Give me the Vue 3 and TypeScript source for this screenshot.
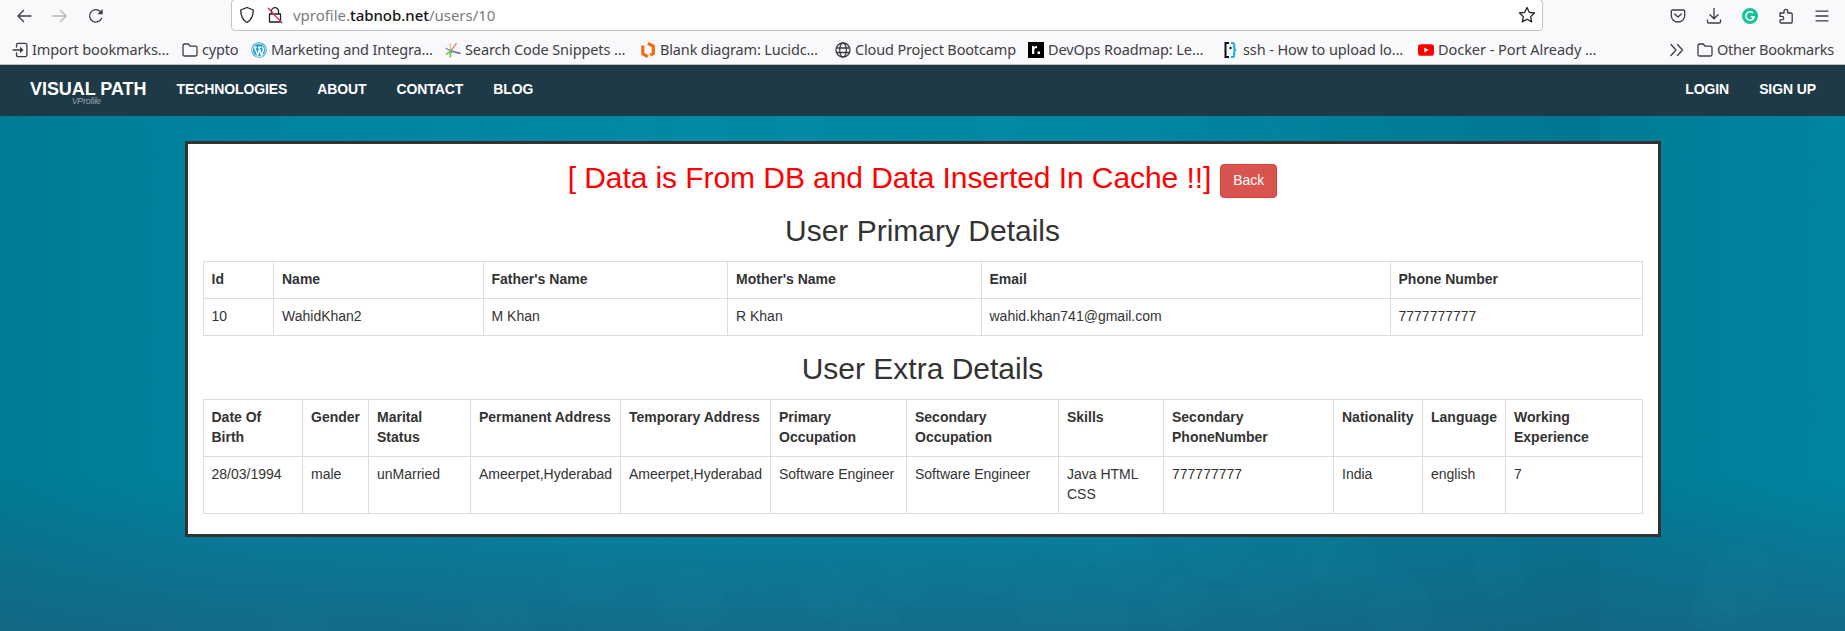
<script setup lang="ts">
interface Bookmark {
  icon: string
  label: string
  width: number
  spacing: number
}

interface Column {
  title: string
  value: string
  width: number
}

const bookmarks: Bookmark[] = [
  { icon: 'import', label: 'Import bookmarks…', width: 170, spacing: -0.12 },
  { icon: 'folder', label: 'cypto', width: 69, spacing: -0.2 },
  { icon: 'wordpress', label: 'Marketing and Integra…', width: 194, spacing: -0.15 },
  { icon: 'burst', label: 'Search Code Snippets …', width: 195, spacing: -0.1 },
  { icon: 'lucid', label: 'Blank diagram: Lucidc…', width: 195, spacing: -0.15 },
  { icon: 'globe', label: 'Cloud Project Bootcamp', width: 193, spacing: -0.15 },
  { icon: 'roadmap', label: 'DevOps Roadmap: Le…', width: 195, spacing: -0.1 },
  { icon: 'braces', label: 'ssh - How to upload lo…', width: 195, spacing: -0.1 },
  { icon: 'youtube', label: 'Docker - Port Already …', width: 195, spacing: -0.05 },
]

const links: string[] = ['TECHNOLOGIES', 'ABOUT', 'CONTACT', 'BLOG']
const accountLinks: string[] = ['LOGIN', 'SIGN UP']

const primary: Column[] = [
  { title: 'Id', value: '10', width: 70.5 },
  { title: 'Name', value: 'WahidKhan2', width: 209.5 },
  { title: "Father's Name", value: 'M Khan', width: 244.5 },
  { title: "Mother's Name", value: 'R Khan', width: 253.5 },
  { title: 'Email', value: 'wahid.khan741@gmail.com', width: 409 },
  { title: 'Phone Number', value: '7777777777', width: 252 },
]

const extra: Column[] = [
  { title: 'Date Of Birth', value: '28/03/1994', width: 99.5 },
  { title: 'Gender', value: 'male', width: 66 },
  { title: 'Marital Status', value: 'unMarried', width: 102 },
  { title: 'Permanent Address', value: 'Ameerpet,Hyderabad', width: 150 },
  { title: 'Temporary Address', value: 'Ameerpet,Hyderabad', width: 150 },
  { title: 'Primary Occupation', value: 'Software Engineer', width: 136 },
  { title: 'Secondary Occupation', value: 'Software Engineer', width: 152 },
  { title: 'Skills', value: 'Java HTML CSS', width: 105 },
  { title: 'Secondary PhoneNumber', value: '777777777', width: 170 },
  { title: 'Nationality', value: 'India', width: 89 },
  { title: 'Language', value: 'english', width: 83 },
  { title: 'Working Experience', value: '7', width: 136.5 },
]

const sections = [
  { heading: 'User Primary Details', columns: primary },
  { heading: 'User Extra Details', columns: extra },
]

// Faint discs scattered over the backdrop: x, y, radius
const discs: [number, number, number][] = [
  [1045, 605, 30], [1127, 563, 30], [1080, 535, 32], [1180, 603, 27], [1215, 550, 32],
  [1268, 585, 30], [1100, 625, 30], [990, 570, 26], [830, 592, 28], [905, 575, 28],
  [870, 630, 32], [1345, 570, 32], [1400, 610, 32], [1310, 560, 22], [500, 630, 36],
  [300, 630, 28], [455, 130, 22], [630, 128, 28], [800, 125, 24], [700, 140, 30],
  [1000, 120, 26], [1130, 130, 30], [1290, 125, 26], [1715, 610, 24], [1740, 580, 36],
  [1500, 570, 26], [590, 580, 30], [690, 600, 34],
]
</script>

<template>
  <div class="window">
    <header class="chrome">
      <div class="toolbar">
        <div class="history">
          <svg width="16" height="16" viewBox="0 0 16 16" class="line"><path d="M15 8H2M7.500 2.500 2 8l5.500 5.500" /></svg>
          <svg width="16" height="16" viewBox="0 0 16 16" class="line off"><path d="M1 8h13M8.500 2.500 14 8l-5.500 5.500" /></svg>
          <svg width="16" height="16" viewBox="0 0 16 16" class="line"><path d="M13.600 10.200A6.200 6.200 0 1 1 12.300 3.500L14 5" /><path d="M14.600 1v5.200H9.400z" class="solid" /></svg>
        </div>
        <div class="address">
          <svg width="16" height="18" viewBox="0 0 16 18" class="line strong"><path d="M8 1.500 14.300 4c0 5.500-1.500 9.800-6.300 12.500C3.200 13.800 1.700 9.500 1.700 4z" /></svg>
          <svg width="18" height="18" viewBox="0 0 18 18" class="line strong lock"><path d="M5.500 8V5.200a3.500 3.500 0 0 1 7 0V8M3.500 8h11v8h-11z" /><path d="M2.300 2.300 15.800 16.800" class="slash" /></svg>
          <span class="url">vprofile.<b>tabnob.net</b>/users/10</span>
          <svg width="18" height="18" viewBox="0 0 18 18" class="line strong star"><path d="m9 1.500 2.250 4.800 5.250.7-3.850 3.600 1 5.300L9 13.300l-4.650 2.600 1-5.300L1.500 7l5.250-.7z" /></svg>
        </div>
        <div class="tools">
          <svg width="16" height="16" viewBox="0 0 16 16" class="line"><path d="M2.500 2h11c.7 0 1.200.5 1.200 1.200v4.600a6.700 6.200 0 0 1-13.400 0V3.200C1.300 2.500 1.800 2 2.500 2zM4.700 6 8 9l3.300-3" /></svg>
          <svg width="16" height="16" viewBox="0 0 16 16" class="line"><path d="M8 0v10.500M4 6.800l4 4 4-4M1.500 12v1.800c0 .7.500 1.200 1.200 1.200h10.600c.7 0 1.200-.5 1.200-1.200V12" /></svg>
          <svg width="16" height="16" viewBox="0 0 16 16"><circle cx="8" cy="8" r="8" fill="#15c39a" /><path d="M11 5A4.200 4.200 0 1 0 12.200 8.700H8.800M11 11V8.700" fill="none" stroke="#fff" stroke-width="1.500" /></svg>
          <svg width="16" height="16" viewBox="0 0 16 16" class="line"><path d="M2 5h4V3.300a1.900 1.900 0 0 1 3.800 0V5h3.400c.6 0 1 .4 1 1v8c0 .6-.4 1-1 1H3c-.6 0-1-.4-1-1v-2.200h2a1.700 1.700 0 0 0 0-3.400H2z" /></svg>
          <svg width="16" height="16" viewBox="0 0 16 16" class="line"><path d="M2 3.200h12M2 8h12M2 12.800h12" /></svg>
        </div>
      </div>

      <div class="bookmarks">
        <div v-for="mark in bookmarks" :key="mark.label" class="bookmark" :style="{ width: mark.width + 'px' }">
          <svg v-if="mark.icon === 'import'" width="16" height="16" viewBox="0 0 16 16" class="line"><path d="M4.500 5V3c0-1 .7-1.700 1.700-1.700h7c1 0 1.700.7 1.700 1.700v10c0 1-.7 1.700-1.700 1.700h-7c-1 0-1.700-.7-1.700-1.700v-2M1 8H10" /><path d="m8 4.700 3.500 3.300L8 11.300z" class="solid" /></svg>
          <svg v-else-if="mark.icon === 'folder'" width="16" height="16" viewBox="0 0 16 16" class="line"><path d="M2.500 2h3.700l2 2.200h5.300c1 0 1.500.6 1.500 1.500v6.800c0 1-.6 1.500-1.500 1.500h-11C1.600 14 1 13.400 1 12.500v-9C1 2.600 1.600 2 2.500 2z" /></svg>
          <svg v-else-if="mark.icon === 'wordpress'" width="16" height="16" viewBox="0 0 16 16"><circle cx="8" cy="8" r="7.700" fill="#1e9fcf" /><circle cx="8" cy="8" r="6.500" fill="none" stroke="#fff" stroke-width=".8" /><path d="M2.700 5.200h3M7 5.200h3M3.600 5.200l3 8 2-6M7.800 5.200l2.800 8 1.800-5.500c.3-1.500-1.600-2-.9-3.400" fill="none" stroke="#fff" stroke-width="1.400" /></svg>
          <svg v-else-if="mark.icon === 'burst'" width="16" height="16" viewBox="0 0 16 16" fill="none" stroke-width="1.300"><path d="M6 9 .5 6" stroke="#8577c0" /><path d="M6 9 5 1.500" stroke="#d6c06a" /><path d="M6 9 11.500 1" stroke="#ef6a5b" /><path d="m6 9 9.500 2.500" stroke="#6c5aa8" /><path d="M6 9 5 15.500M6 9 1 12.500" stroke="#7ac653" stroke-width="1.800" /><circle cx="6" cy="9" r="1.800" fill="#5fbf4a" /></svg>
          <svg v-else-if="mark.icon === 'lucid'" width="16" height="16" viewBox="0 0 16 16" fill="none" stroke="#f96b13" stroke-width="3.200"><path d="M2.800 3.500v8.300l5 2.900" /><path d="m8 1.300 5.300 3v7.200l-3 1.700" /></svg>
          <svg v-else-if="mark.icon === 'globe'" width="16" height="16" viewBox="0 0 16 16" class="line"><circle cx="8" cy="8" r="7" /><ellipse cx="8" cy="8" rx="3.300" ry="7" /><path d="M1.500 6h13M1.500 10.500h13" /></svg>
          <svg v-else-if="mark.icon === 'roadmap'" width="16" height="16" viewBox="0 0 16 16"><path d="M0 0h16v16H0z" fill="#000" /><path d="M4 4h2v1.200C6.700 4.300 7.600 4 9 4v2c-2 0-2.700.7-2.700 2v4H4zM9.500 9.500H12V12H9.500z" fill="#fff" /></svg>
          <svg v-else-if="mark.icon === 'braces'" width="16" height="16" viewBox="0 0 16 16" fill="none" stroke-width="2"><path d="M6 1H2.500v14H6" stroke="#111" /><path d="M8 1h1.500c1.200 0 1.700.6 1.700 1.700V6c0 1 .7 2 2 2-1.300 0-2 1-2 2v3.300c0 1.100-.5 1.700-1.700 1.700H8" stroke="#18aee8" /><path d="M7.500 5v2" stroke="#111" /></svg>
          <svg v-else width="16" height="16" viewBox="0 0 16 16"><rect y="2.300" width="16" height="11.400" rx="2.800" fill="#f00" /><path d="m6.300 5.600 4.200 2.400-4.200 2.400z" fill="#fff" /></svg>
          <span :style="{ letterSpacing: mark.spacing + 'px' }">{{ mark.label }}</span>
        </div>
        <div class="overflow">
          <svg width="16" height="16" viewBox="0 0 16 16" class="line"><path d="m2 2.500 5 5.500-5 5.500M8.500 2.500l5 5.500-5 5.500" /></svg>
        </div>
        <div class="bookmark other">
          <svg width="16" height="16" viewBox="0 0 16 16" class="line"><path d="M2.500 2h3.700l2 2.200h5.300c1 0 1.500.6 1.500 1.500v6.800c0 1-.6 1.500-1.500 1.500h-11C1.600 14 1 13.400 1 12.500v-9C1 2.600 1.600 2 2.500 2z" /></svg>
          <span>Other Bookmarks</span>
        </div>
      </div>
    </header>

    <nav class="navbar">
      <a class="brand">VISUAL PATH<small>VProfile</small></a>
      <a v-for="link in links" :key="link" class="link">{{ link }}</a>
      <div class="account">
        <a v-for="link in accountLinks" :key="link" class="link">{{ link }}</a>
      </div>
    </nav>

    <main class="page">
      <svg class="backdrop" viewBox="0 116 1845 515" preserveAspectRatio="none" aria-hidden="true">
        <defs>
          <filter id="grain" x="0" y="0" width="100%" height="100%">
            <feTurbulence type="fractalNoise" baseFrequency="0.35" numOctaves="3" seed="4" />
            <feColorMatrix values="0 0 0 0 0  0 0 0 0 .2  0 0 0 0 .27  0 0 0 .28 -.07" />
          </filter>
        </defs>
        <rect y="116" width="1845" height="515" filter="url(#grain)" />
        <circle v-for="([cx, cy, r], i) in discs" :key="i" :cx="cx" :cy="cy" :r="r" />
      </svg>
      <section class="card">
        <h2 class="notice">
          <span>[ Data is From DB and Data Inserted In Cache !!]</span>
          <a class="button">Back</a>
        </h2>
        <template v-for="section in sections" :key="section.heading">
          <h2>{{ section.heading }}</h2>
          <table>
            <colgroup>
              <col v-for="column in section.columns" :key="column.title" :style="{ width: column.width + 'px' }" />
            </colgroup>
            <thead>
              <tr><th v-for="column in section.columns" :key="column.title">{{ column.title }}</th></tr>
            </thead>
            <tbody>
              <tr><td v-for="column in section.columns" :key="column.title">{{ column.value }}</td></tr>
            </tbody>
          </table>
        </template>
      </section>
    </main>
  </div>
</template>

<style>
body {
  margin: 0;
  overflow: hidden;
}
</style>

<style scoped>
.window {
  width: 1845px;
  height: 631px;
  display: flex;
  flex-direction: column;
  overflow: hidden;
  font-family: "Liberation Sans", Arial, sans-serif;
  font-size: 14px;
  line-height: 20px;
  color: #333;
}

.window * {
  box-sizing: border-box;
}

svg {
  flex: none;
  display: block;
}

.line {
  fill: none;
  stroke: #3d3c42;
  stroke-width: 1.3;
  stroke-linejoin: round;
  stroke-linecap: round;
}

.line.strong {
  stroke: #222127;
}

.line.off {
  stroke: #b3b3b5;
}

.line .solid {
  fill: #3d3c42;
  stroke: none;
}

.line .slash {
  stroke: #e22850;
}

.chrome {
  height: 65px;
  flex: none;
  background: #f9f9fb;
  border-bottom: 1px solid #bdbdbe;
  font-family: "Noto Sans", "Open Sans", sans-serif;
  color: #3f3e44;
}

.toolbar {
  height: 31px;
  display: flex;
}

.history {
  width: 231px;
  display: flex;
  align-items: center;
  gap: 20px;
  padding-left: 16px;
}

.address {
  width: 1312px;
  height: 32px;
  margin-top: -1px;
  display: flex;
  align-items: center;
  background: #fff;
  border: 1px solid #c3c3c5;
  border-radius: 4px;
  padding: 0 6px 0 7px;
}

.lock {
  margin-left: 11px;
}

.url {
  margin-left: 9px;
  font-size: 15px;
  letter-spacing: -.03px;
  color: #7b7b7e;
}

.url b {
  font-weight: 500;
  color: #15141a;
}

.star {
  margin-left: auto;
}

.tools {
  margin-left: 127px;
  display: flex;
  align-items: center;
  gap: 20px;
}

.bookmarks {
  height: 33px;
  padding: 5px 11px 0 12px;
  display: flex;
  align-items: center;
}

.bookmark {
  flex: none;
  display: flex;
  align-items: center;
  gap: 4px;
  font-size: 14.500px;
  white-space: nowrap;
}

.bookmark span {
  padding-bottom: 2px;
}

.bookmark.other {
  letter-spacing: -.23px;
}

.overflow {
  margin-left: auto;
  margin-right: 12px;
}

.navbar {
  height: 51px;
  flex: none;
  display: flex;
  padding: 0 14px 0 15px;
  background: #1e3a46;
  color: #fff;
  font-weight: bold;
}

.brand {
  padding: 15px 15px 0;
  font-size: 18px;
  line-height: 18px;
  letter-spacing: -.05px;
  display: flex;
  flex-direction: column;
  align-items: center;
}

.brand small {
  margin: -1px 4px 0 0;
  font-size: 9px;
  line-height: 9px;
  letter-spacing: -.3px;
  font-style: italic;
  font-weight: normal;
  color: #98a3a9;
}

.link {
  padding: 14px 15px;
  letter-spacing: -.1px;
}

.account {
  margin-left: auto;
  display: flex;
}

.page {
  flex: 1;
  position: relative;
  padding-top: 25px;
  background:
    linear-gradient(to bottom, rgba(36, 86, 117, 0) 360px, rgba(36, 86, 117, .58) 515px),
    linear-gradient(to right, rgba(0, 96, 120, 0) 1100px, rgba(0, 96, 120, .4) 1580px, rgba(0, 96, 120, .4) 1600px, rgba(0, 96, 120, .28) 1600px, rgba(0, 96, 120, .12) 1740px, rgba(0, 96, 120, 0) 1845px),
    linear-gradient(to right, #007b94 0, #0083a0 230px, #0089a6 700px, #0088a5 1000px, #0085a2 1845px);
}

.backdrop {
  position: absolute;
  inset: 0;
  width: 100%;
  height: 100%;
}

.backdrop circle {
  fill: rgba(40, 155, 180, .045);
}

.card {
  position: relative;
  display: flow-root;
  width: 80%;
  margin: 0 auto;
  padding: 0 15px;
  background: #fff;
  border: 3px solid #333;
}

h2 {
  margin: 20px 0 10px;
  height: 33px;
  font-size: 30px;
  font-weight: 500;
  line-height: 25px;
  text-align: center;
}

.notice {
  height: 34px;
  display: flex;
  justify-content: center;
  align-items: flex-start;
  gap: 9px;
  color: #f00;
}

.notice span {
  padding-top: 1px;
  letter-spacing: -.07px;
}

.button {
  padding: 5px 12px 7px;
  border: 1px solid #d43f3a;
  border-radius: 4px;
  background: #d9534f;
  color: #fff;
  font-size: 14px;
  font-weight: normal;
  line-height: 20px;
}

table {
  width: 1439px;
  margin-bottom: 20px;
  table-layout: fixed;
  border-collapse: collapse;
}

th,
td {
  padding: 7px 8px 9px;
  border: 1px solid #ddd;
  text-align: left;
  vertical-align: top;
}
</style>
